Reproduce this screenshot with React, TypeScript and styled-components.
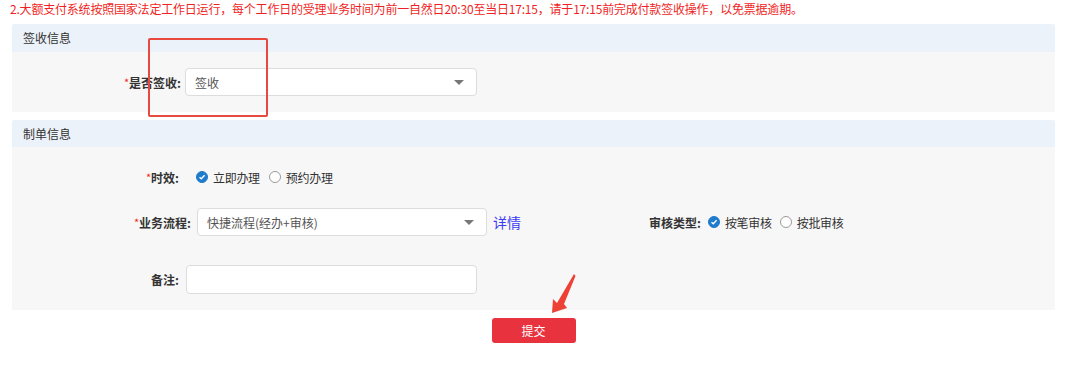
import styled, { createGlobalStyle } from 'styled-components';

const GlobalStyle = createGlobalStyle`
  html, body {
    margin: 0;
    padding: 0;
    background: #ffffff;
    font-family: 'Noto Sans CJK SC', 'Noto Sans', sans-serif;
    color: #333333;
  }
`;

const COLORS = {
  RED: '#f01f25',
  HEADER_BG: '#ecf2f9',
  BODY_BG: '#f7f7f7',
  BORDER: '#dcdcdc',
  TEXT: '#333333',
  BLUE: '#1f7bcc',
  LINK: '#3b3bf5',
  BUTTON: '#e8333f',
};

const StyledPage = styled.div`
  position: relative;
  width: 1080px;
  height: 379px;
  overflow: hidden;

  .page__notice {
    padding-left: 10px;
    height: 24px;
    line-height: 18px;
    font-size: 12px;
    letter-spacing: -0.2px;
    color: ${COLORS.RED};
    white-space: nowrap;
  }

  .page__content {
    margin: 0 25px 0 12px;
    display: flex;
    flex-direction: column;
    gap: 8px;
  }

  .page__footer {
    display: flex;
    justify-content: center;
  }
`;

const Section = styled.div`
  display: flex;
  flex-direction: column;
`;

const SectionHeader = styled.div<{ $height: number }>`
  height: ${(p) => p.$height}px;
  line-height: ${(p) => p.$height}px;
  padding-left: 11px;
  background: ${COLORS.HEADER_BG};
  border-radius: 2px 2px 0 0;
  font-size: 12px;
  color: ${COLORS.TEXT};
`;

const SectionBody = styled.div<{ $padding: string }>`
  display: flex;
  flex-direction: column;
  padding: ${(p) => p.$padding};
  background: ${COLORS.BODY_BG};
`;

const FormRow = styled.div<{ $top?: number }>`
  display: flex;
  align-items: center;
  height: 28px;
  margin-top: ${(p) => p.$top ?? 0}px;
`;

const Label = styled.label<{ $width: number; $gap: number }>`
  width: ${(p) => p.$width}px;
  margin-right: ${(p) => p.$gap}px;
  flex-shrink: 0;
  text-align: right;
  font-size: 12px;
  font-weight: bold;
  color: ${COLORS.TEXT};
  white-space: nowrap;

  .required {
    color: ${COLORS.RED};
    font-weight: normal;
    font-size: 11px;
    position: relative;
    top: -1px;
  }
`;

const Select = styled.div<{ $width: number; $padding: number }>`
  box-sizing: border-box;
  width: ${(p) => p.$width}px;
  height: 28px;
  display: flex;
  align-items: center;
  justify-content: space-between;
  padding: 0 12px 0 ${(p) => p.$padding}px;
  background: #ffffff;
  border: 1px solid ${COLORS.BORDER};
  border-radius: 4px;
  font-size: 12px;
  color: #555555;

  .caret {
    width: 0;
    height: 0;
    border-left: 5px solid transparent;
    border-right: 5px solid transparent;
    border-top: 5px solid #777777;
  }
`;

const TextInput = styled.div`
  box-sizing: border-box;
  width: 291px;
  height: 29px;
  background: #ffffff;
  border: 1px solid ${COLORS.BORDER};
  border-radius: 4px;
`;

const RadioGroup = styled.div<{ $gap: number }>`
  display: flex;
  align-items: center;
  gap: ${(p) => p.$gap}px;
`;

const RadioItem = styled.span`
  display: flex;
  align-items: center;
  gap: 5px;
  font-size: 12px;
  letter-spacing: -0.3px;
  color: ${COLORS.TEXT};
`;

const RadioCircle = styled.span<{ $checked: boolean }>`
  box-sizing: border-box;
  width: 12px;
  height: 12px;
  border-radius: 50%;
  display: flex;
  align-items: center;
  justify-content: center;
  background: ${(p) => (p.$checked ? COLORS.BLUE : '#ffffff')};
  border: 1px solid ${(p) => (p.$checked ? COLORS.BLUE : '#9a9a9a')};
`;

const DetailLink = styled.a`
  margin-left: 6px;
  font-size: 14px;
  color: ${COLORS.LINK};
  text-decoration: none;
`;

const SideField = styled.div`
  display: flex;
  align-items: center;
  margin-left: 128px;

  .side__label {
    font-size: 12px;
    font-weight: bold;
    color: ${COLORS.TEXT};
    margin-right: 7px;
  }
`;

const SubmitButton = styled.button`
  width: 84px;
  height: 25px;
  border: none;
  border-radius: 3px;
  background: ${COLORS.BUTTON};
  color: #ffffff;
  font-family: inherit;
  font-size: 12px;
  padding: 0;
`;

const Highlight = styled.div`
  position: absolute;
  left: 148px;
  top: 38px;
  width: 120px;
  height: 79px;
  box-sizing: border-box;
  border: 2px solid #e8483d;
  border-radius: 2px;
  pointer-events: none;
`;

const ArrowMark = styled.svg`
  position: absolute;
  left: 545px;
  top: 270px;
  width: 36px;
  height: 48px;
`;

function Radio({ checked, label }: { checked: boolean; label: string }) {
  return (
    <RadioItem>
      <RadioCircle $checked={checked}>
        {checked && (
          <svg width='8' height='8' viewBox='0 0 8 8'>
            <path d='M1.5 4.2 L3.3 5.8 L6.6 2.3' fill='none' stroke='#ffffff' strokeWidth='1.4' />
          </svg>
        )}
      </RadioCircle>
      {label}
    </RadioItem>
  );
}

function App() {
  return (
    <StyledPage>
      <GlobalStyle />
      <div className='page__notice'>
        2.大额支付系统按照国家法定工作日运行，每个工作日的受理业务时间为前一自然日20:30至当日17:15，请于17:15前完成付款签收操作，以免票据逾期。
      </div>
      <div className='page__content'>
        <Section>
          <SectionHeader $height={28}>签收信息</SectionHeader>
          <SectionBody $padding='16px 0'>
            <FormRow>
              <Label $width={169} $gap={4}>
                <span className='required'>*</span>是否签收:
              </Label>
              <Select $width={292} $padding={9}>
                签收
                <span className='caret' />
              </Select>
            </FormRow>
          </SectionBody>
        </Section>
        <Section>
          <SectionHeader $height={27}>制单信息</SectionHeader>
          <SectionBody $padding='16px 0 17px'>
            <FormRow>
              <Label $width={167} $gap={17}>
                <span className='required'>*</span>时效:
              </Label>
              <RadioGroup $gap={9}>
                <Radio checked label='立即办理' />
                <Radio checked={false} label='预约办理' />
              </RadioGroup>
            </FormRow>
            <FormRow $top={17}>
              <Label $width={179} $gap={6}>
                <span className='required'>*</span>业务流程:
              </Label>
              <Select $width={290} $padding={9}>
                快捷流程(经办+审核)
                <span className='caret' />
              </Select>
              <DetailLink>详情</DetailLink>
              <SideField>
                <span className='side__label'>审核类型:</span>
                <RadioGroup $gap={8}>
                  <Radio checked label='按笔审核' />
                  <Radio checked={false} label='按批审核' />
                </RadioGroup>
              </SideField>
            </FormRow>
            <FormRow $top={29}>
              <Label $width={167} $gap={7}>
                备注:
              </Label>
              <TextInput />
            </FormRow>
          </SectionBody>
        </Section>
        <div className='page__footer'>
          <SubmitButton>提交</SubmitButton>
        </div>
      </div>
      <Highlight />
      <ArrowMark viewBox='0 0 36 48'>
        <polygon points='29,4 30.5,6 19,34 22,38 7,43 8,29 12,33' fill='#ee4136' />
      </ArrowMark>
    </StyledPage>
  );
}

export default App;
